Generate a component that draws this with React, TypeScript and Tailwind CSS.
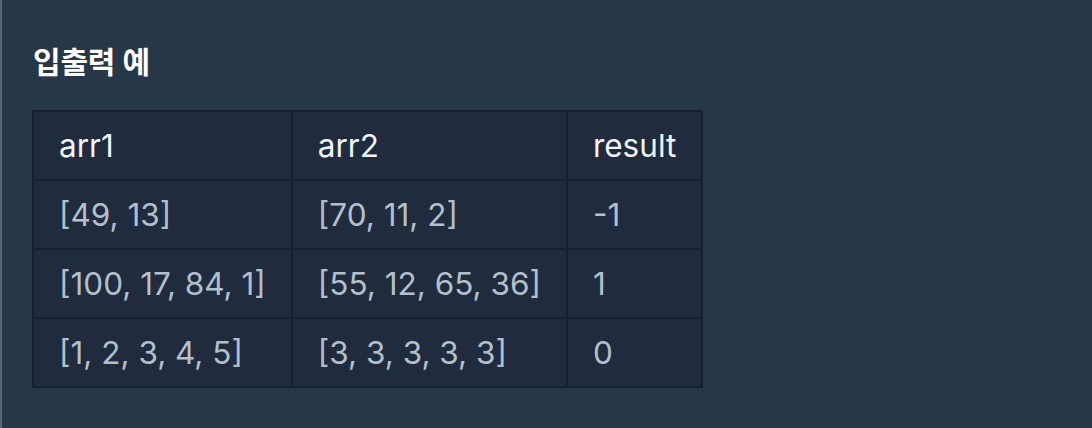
const rows = [
  ['[49, 13]', '[70, 11, 2]', '-1'],
  ['[100, 17, 84, 1]', '[55, 12, 65, 36]', '1'],
  ['[1, 2, 3, 4, 5]', '[3, 3, 3, 3, 3]', '0'],
];

const font = { fontFamily: 'Inter, "Noto Sans CJK KR", sans-serif' };

export default function App() {
  return (
    <div className="flex h-[428px] w-[1092px] bg-[#263747]" style={font}>
      <div className="w-[2px] shrink-0 bg-[#5a6472]" />
      <div className="flex-1 pl-[30px] pt-[42px]">
        <h5 className="pl-px text-[30px] font-semibold leading-[40px] tracking-[-0.2px] text-white">
          입출력 예
        </h5>
        <table className="mt-[28px] border-collapse border-2 border-[#172030] bg-[#202b3d] text-[31.5px] leading-[40px]">
          <thead>
            <tr>
              {['arr1', 'arr2', 'result'].map((h) => (
                <th
                  key={h}
                  className="h-[69px] border-2 border-[#172030] px-[25px] text-left font-normal text-[#f0f3f6]"
                >
                  {h}
                </th>
              ))}
            </tr>
          </thead>
          <tbody>
            {rows.map((r, i) => (
              <tr key={i}>
                {r.map((c, j) => (
                  <td key={j} className="h-[69px] border-2 border-[#172030] px-[25px] text-[#b2c0cc]">
                    {c}
                  </td>
                ))}
              </tr>
            ))}
          </tbody>
        </table>
      </div>
    </div>
  );
}
